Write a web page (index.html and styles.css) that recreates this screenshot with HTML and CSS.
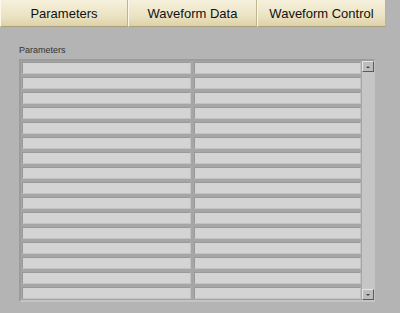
FILE: index.html
```html
<!DOCTYPE html>
<html lang="en">
<head>
    <meta charset="UTF-8">
    <title>Parameters</title>
    <link rel="stylesheet" href="styles.css">
</head>
<body>
    <nav class="tabs">
        <div class="tab">Parameters</div>
        <div class="tab">Waveform Data</div>
        <div class="tab">Waveform Control</div>
    </nav>
    <main class="panel">
        <div class="caption">Parameters</div>
        <div class="frame">
            <div class="cells" id="cells"></div>
            <div class="scrollbar">
                <div class="arrow up"><span></span></div>
                <div class="track"></div>
                <div class="arrow down"><span></span></div>
            </div>
        </div>
    </main>
    <script>
        const cells = document.getElementById("cells");
        for (let i = 0; i < 32; i++) {
            let c = document.createElement("div");
            c.className = "cell";
            cells.appendChild(c);
        }
    </script>
</body>
</html>
```
FILE: styles.css
```css
body {
    margin: 0;
    background: #b4b4b4;
    font-family: "Liberation Sans", sans-serif;
    width: 400px;
    height: 313px;
    overflow: hidden;
}
.tabs {
    display: flex;
    width: 386px;
    height: 27px;
}
.tab {
    flex: 0 0 auto;
    box-sizing: border-box;
    height: 27px;
    line-height: 28px;
    text-align: center;
    font-size: 13px;
    color: #111;
    background: linear-gradient(to bottom, #f6f1dc, #ebe3c3 60%, #ddd2a8);
    border-left: 1px solid #fbf8ea;
    border-right: 1px solid #bfb490;
    border-bottom: 1px solid #a99f7c;
}
.tab:nth-child(1) { width: 128px; }
.tab:nth-child(2) { width: 129px; }
.tab:nth-child(3) { width: 129px; }
.panel {
    padding: 17px 0 0 19px;
}
.caption {
    font-size: 9px;
    color: #333;
    height: 15px;
    line-height: 12px;
}
.frame {
    display: flex;
    width: 356px;
    box-sizing: border-box;
    border-top: 2px solid #9c9c9c;
    border-left: 2px solid #9c9c9c;
    border-right: 1px solid #c4c4c4;
    border-bottom: 2px solid #c4c4c4;
    background: #a6a6a6;
}
.cells {
    display: grid;
    grid-template-columns: 169px 167px;
    grid-auto-rows: 12px;
    gap: 3px;
    padding: 1px 0 1px 1px;
}
.cell {
    background: #d4d4d4;
    border-top: 1px solid #999;
    border-left: 1px solid #999;
    border-bottom: 1px solid #c2c2c2;
    border-right: 1px solid #c2c2c2;
    box-sizing: border-box;
}
.scrollbar {
    width: 13px;
    display: flex;
    flex-direction: column;
    background: #c6c6c6;
    margin-left: 1px;
}
.track {
    flex: 1;
}
.arrow {
    height: 11px;
    box-sizing: border-box;
    border: 1px solid;
    border-color: #e6e6e6 #5a5a5a #5a5a5a #e6e6e6;
    background: #bdbdbd;
    display: flex;
    align-items: center;
    justify-content: center;
}
.arrow span {
    width: 0;
    height: 0;
    border-left: 2px solid transparent;
    border-right: 2px solid transparent;
}
.up span { border-bottom: 2px solid #444; }
.down span { border-top: 2px solid #444; }
```
